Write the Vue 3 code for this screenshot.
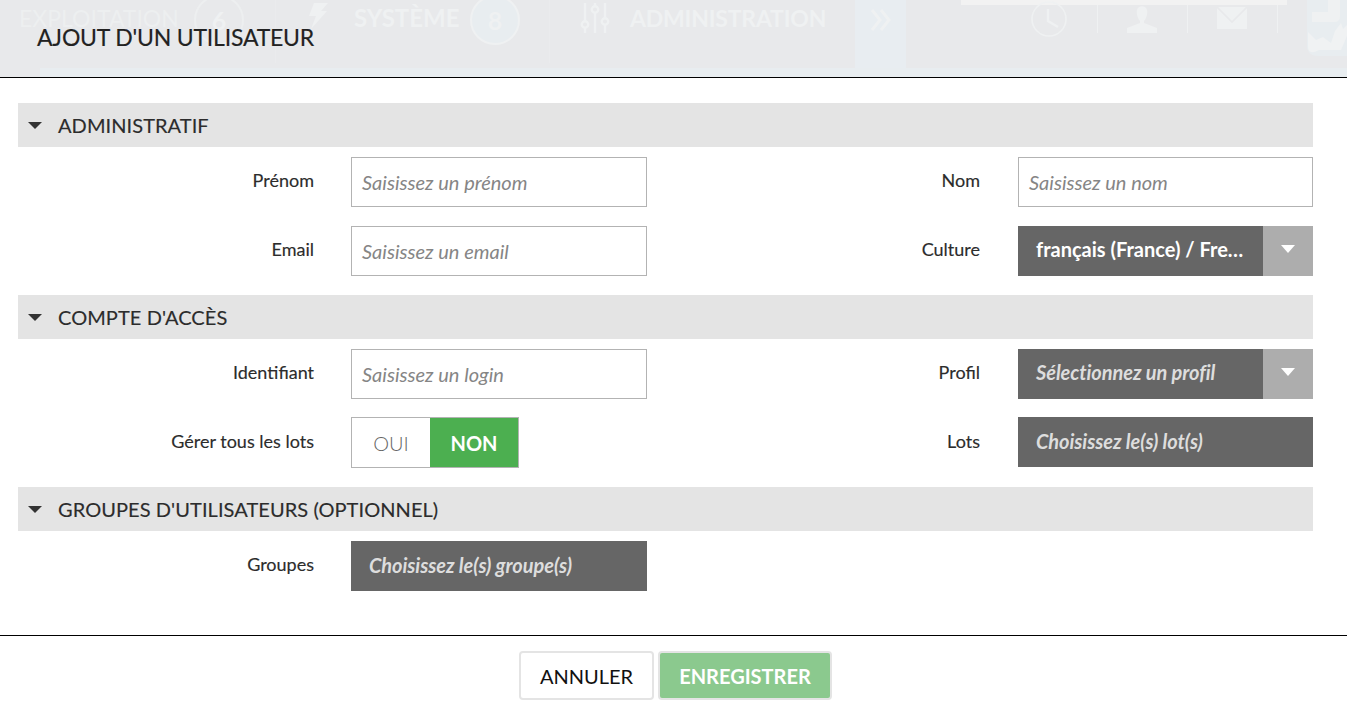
<script setup>
const sections = [
  { title: "ADMINISTRATIF", rows: [
    { gap: 19, cells: [
      { label: "Prénom", type: "input", ph: "Saisissez un prénom" },
      { label: "Nom", type: "input", ph: "Saisissez un nom" } ] },
    { gap: 19, cells: [
      { label: "Email", type: "input", ph: "Saisissez un email" },
      { label: "Culture", type: "select", text: "français (France) / Fre…", value: true } ] }
  ]},
  { title: "COMPTE D'ACCÈS", rows: [
    { gap: 18, cells: [
      { label: "Identifiant", type: "input", ph: "Saisissez un login" },
      { label: "Profil", type: "select", text: "Sélectionnez un profil" } ] },
    { gap: 20, tall: true, cells: [
      { label: "Gérer tous les lots", type: "toggle" },
      { label: "Lots", type: "multi", text: "Choisissez le(s) lot(s)" } ] }
  ]},
  { title: "GROUPES D'UTILISATEURS (OPTIONNEL)", rows: [
    { gap: 0, cells: [
      { label: "Groupes", type: "multi", text: "Choisissez le(s) groupe(s)" } ] }
  ]}
];
</script>

<template>
  <div class="modal">
    <header class="head">
      <div class="ghost">
        <span class="g-text g-expl">EXPLOITATION</span>
        <span class="g-circle g-c1">6</span>
        <i class="g-vline g-v1"></i>
        <svg class="g-bolt" width="20" height="26" viewBox="0 0 20 26"><path d="M6 0h14l-7 8h6L3 26l5-13H1z" fill="#eff1f2"/></svg>
        <span class="g-text g-sys">SYSTÈME</span>
        <span class="g-circle g-c2">8</span>
        <i class="g-vline g-v2"></i>
        <svg class="g-sliders" width="30" height="30" viewBox="0 0 30 30" fill="none" stroke="#eff1f2" stroke-width="2.4"><path d="M5 0v18M5 25v5M15 0v3M15 10v20M25 0v15M25 22v8"/><circle cx="5" cy="21.5" r="3.2"/><circle cx="15" cy="6.5" r="3.2"/><circle cx="25" cy="18.5" r="3.2"/></svg>
        <span class="g-text g-adm">ADMINISTRATION</span>
        <div class="g-more"><svg width="22" height="22" viewBox="0 0 22 22" fill="none" stroke="#eff1f2" stroke-width="3"><path d="M2 1l8 10-8 10M11 1l8 10-8 10"/></svg></div>
        <div class="g-search"></div>
        <svg class="g-clock" width="36" height="36" viewBox="0 0 36 36" fill="none" stroke="#eff1f2" stroke-width="1.6"><circle cx="18" cy="18" r="17"/><path stroke-width="2.4" d="M17 8v12l10 6"/></svg>
        <i class="g-sep g-s1"></i>
        <svg class="g-user" width="30" height="27" viewBox="0 0 30 27"><path d="M10 4c1-5 9-5 10 0 1 4-1 9-3 11v2l13 5v5H0v-5l13-5v-2c-2-2-4-7-3-11z" fill="#eff1f2"/></svg>
        <i class="g-sep g-s2"></i>
        <svg class="g-mail" width="30" height="22" viewBox="0 0 30 22"><rect width="30" height="22" fill="#eff1f2"/><path d="M0 0l15 15L30 0" fill="none" stroke="#e8e9eb" stroke-width="1.6"/></svg>
        <i class="g-sep g-s3"></i>
        <svg class="g-logo" width="40" height="56" viewBox="0 0 40 56"><path d="M0 0h40v56H12Q0 56 0 46z" fill="#e8edf0"/><path d="M21 0h12v16q0 6-6 6H5V12h16z" fill="#eff1f2"/><path d="M1 32l8 8 7-3 8 6 4-12 6-8 2 6 4-4v11l-6 14H12Q1 56 1 46z" fill="#f0f2f3"/></svg>
      </div>
      <i class="g-corner"></i>
      <h1 class="title">AJOUT D'UN UTILISATEUR</h1>
    </header>

    <main class="body">
      <section v-for="s in sections" :key="s.title" class="section">
        <h2 class="bar"><span class="caret"></span>{{ s.title }}</h2>
        <div class="rows">
          <div v-for="(r, i) in s.rows" :key="i" class="row" :class="{ tall: r.tall }" :style="{ marginBottom: r.gap + 'px' }">
            <template v-for="c in r.cells" :key="c.label">
              <label class="lbl">{{ c.label }}</label>
              <div v-if="c.type === 'input'" class="input">{{ c.ph }}</div>
              <div v-else-if="c.type === 'select'" class="select">
                <span class="sel-text has-btn" :class="{ ph: !c.value }">{{ c.text }}</span>
                <span class="sel-btn"><span class="sel-caret"></span></span>
              </div>
              <div v-else-if="c.type === 'multi'" class="select"><span class="sel-text ph">{{ c.text }}</span></div>
              <div v-else class="toggle"><span class="t-off">OUI</span><span class="t-on">NON</span></div>
            </template>
          </div>
        </div>
      </section>
    </main>

    <footer class="foot">
      <button class="btn cancel">ANNULER</button>
      <button class="btn save">ENREGISTRER</button>
    </footer>
  </div>
</template>

<style>
html, body { margin: 0; background: #fff; }
</style>

<style scoped>
.modal { width: 1347px; height: 710px; overflow: hidden; font-family: Lato, "Open Sans", sans-serif; color: #333; display: flex; flex-direction: column; background: #fff; }
.head { height: 78px; box-sizing: border-box; position: relative; flex: none; border-bottom: 1px solid #000; background: #e8edf0; overflow: hidden; }
.ghost { position: absolute; left: 0; top: 0; width: 100%; height: 68px; background: #e8e9eb; color: #eff1f2; }
.ghost > * { position: absolute; }
.g-corner { position: absolute; left: 0; top: 68px; width: 40px; height: 9px; background: #e8e9eb; }
.g-text { line-height: 36px; top: 0; white-space: nowrap; font-weight: 700; }
.g-expl { left: 19px; color: #edeff0; font-size: 23px; font-weight: 400; }
.g-sys { left: 354px; font-size: 24px; }
.g-adm { left: 630px; font-size: 23px; letter-spacing: -.2px; }
.g-circle { width: 46px; height: 46px; border: 2px solid #eff1f2; border-radius: 50%; top: -5px; text-align: center; line-height: 46px; font-size: 25px; font-weight: 700; }
.g-c1 { left: 194px; border-color: #edeff0; }
.g-c2 { left: 470px; background: #e8edf0; }
.g-vline { top: 0; width: 1px; height: 63px; background: #eaebed; }
.g-v1 { left: 275px; } .g-v2 { left: 549px; }
.g-bolt { left: 308px; top: 3px; }
.g-sliders { left: 580px; top: 3px; }
.g-more { left: 855px; top: 0; width: 51px; height: 68px; background: #e8edf1; }
.g-more svg { position: absolute; left: 15px; top: 9px; }
.g-search { left: 961px; top: 0; width: 326px; height: 5px; background: #f2f2f2; }
.g-clock { left: 1031px; top: 1px; }
.g-sep { width: 1px; height: 28px; top: 5px; background: #eff1f2; }
.g-s1 { left: 1097px; } .g-s2 { left: 1187px; } .g-s3 { left: 1277px; }
.g-user { left: 1127px; top: 6px; }
.g-mail { left: 1217px; top: 7px; }
.g-logo { left: 1307px; top: 0; }
.title { position: absolute; left: 37px; top: 23px; margin: 0; font-size: 23px; line-height: 28px; font-weight: 400; color: #222; white-space: nowrap; letter-spacing: -.2px; -webkit-text-stroke: .15px #222; }

.body { padding: 25px 34px 0 18px; flex: 1; }
.bar { height: 44px; margin: 0 0 10px; background: #e4e4e4; display: flex; align-items: center; font-size: 20px; font-weight: 400; color: #2c2c2c; white-space: nowrap; padding-left: 10px; letter-spacing: .07px; -webkit-text-stroke: .15px #2c2c2c; }
.caret { width: 0; height: 0; border-left: 7px solid transparent; border-right: 7px solid transparent; border-top: 7px solid #333; margin-right: 16px; margin-top: 1px; }
.row { display: grid; grid-template-columns: 296px 37px 296px 333px 38px 295px; height: 50px; align-items: start; }
.lbl { font-size: 18px; line-height: 22px; text-align: right; padding-top: 12px; color: #2c2c2c; -webkit-text-stroke: .15px #2c2c2c; }
.row.tall .lbl { padding-top: 13px; }
.row > .input, .row > .select, .row > .toggle { box-sizing: border-box; height: 50px; }
.row > .toggle { height: 51px; }
.row > :nth-child(1) { grid-column: 1; }
.row > :nth-child(2) { grid-column: 3; }
.row > :nth-child(3) { grid-column: 4; }
.row > :nth-child(4) { grid-column: 6; }
.input { border: 1px solid #b3b3b3; padding: 0 10px; font-size: 20px; font-style: italic; line-height: 48px; color: #858585; background: #fff; white-space: nowrap; }
.select { display: flex; background: #666; color: #fff; }
.sel-text { flex: 1; min-width: 0; padding: 0 18px; font-size: 20px; font-weight: 700; line-height: 48px; white-space: nowrap; }
.sel-text.has-btn { line-height: 47px; }
.sel-text.ph { font-style: italic; color: #ddd; letter-spacing: -.07px; }
.sel-btn { flex: none; width: 50px; background: #adadad; display: flex; align-items: center; justify-content: center; }
.sel-caret { width: 0; height: 0; border-left: 7px solid transparent; border-right: 7px solid transparent; border-top: 8px solid #fff; margin-top: -4px; }
.toggle { display: flex; width: 168px; border: 1px solid #b3b3b3; }
.t-off { width: 78px; text-align: center; font-size: 20px; line-height: 50px; color: #666; font-weight: 300; }
.t-on { flex: 1; background: #4caf50; color: #fff; text-align: center; font-size: 20px; font-weight: 700; line-height: 50px; }

.foot { height: 75px; flex: none; border-top: 1px solid #000; display: flex; justify-content: center; align-items: flex-start; gap: 4px; padding: 15px 0 0 4px; box-sizing: border-box; }
.btn { height: 49px; border-radius: 4px; font-family: inherit; font-size: 20px; padding: 0; border: 2px solid #e4e4e4; box-sizing: border-box; }
.cancel { width: 135px; background: #fff; color: #111; }
.save { width: 174px; background: #8bc98e; color: #fff; font-weight: 700; }
</style>
